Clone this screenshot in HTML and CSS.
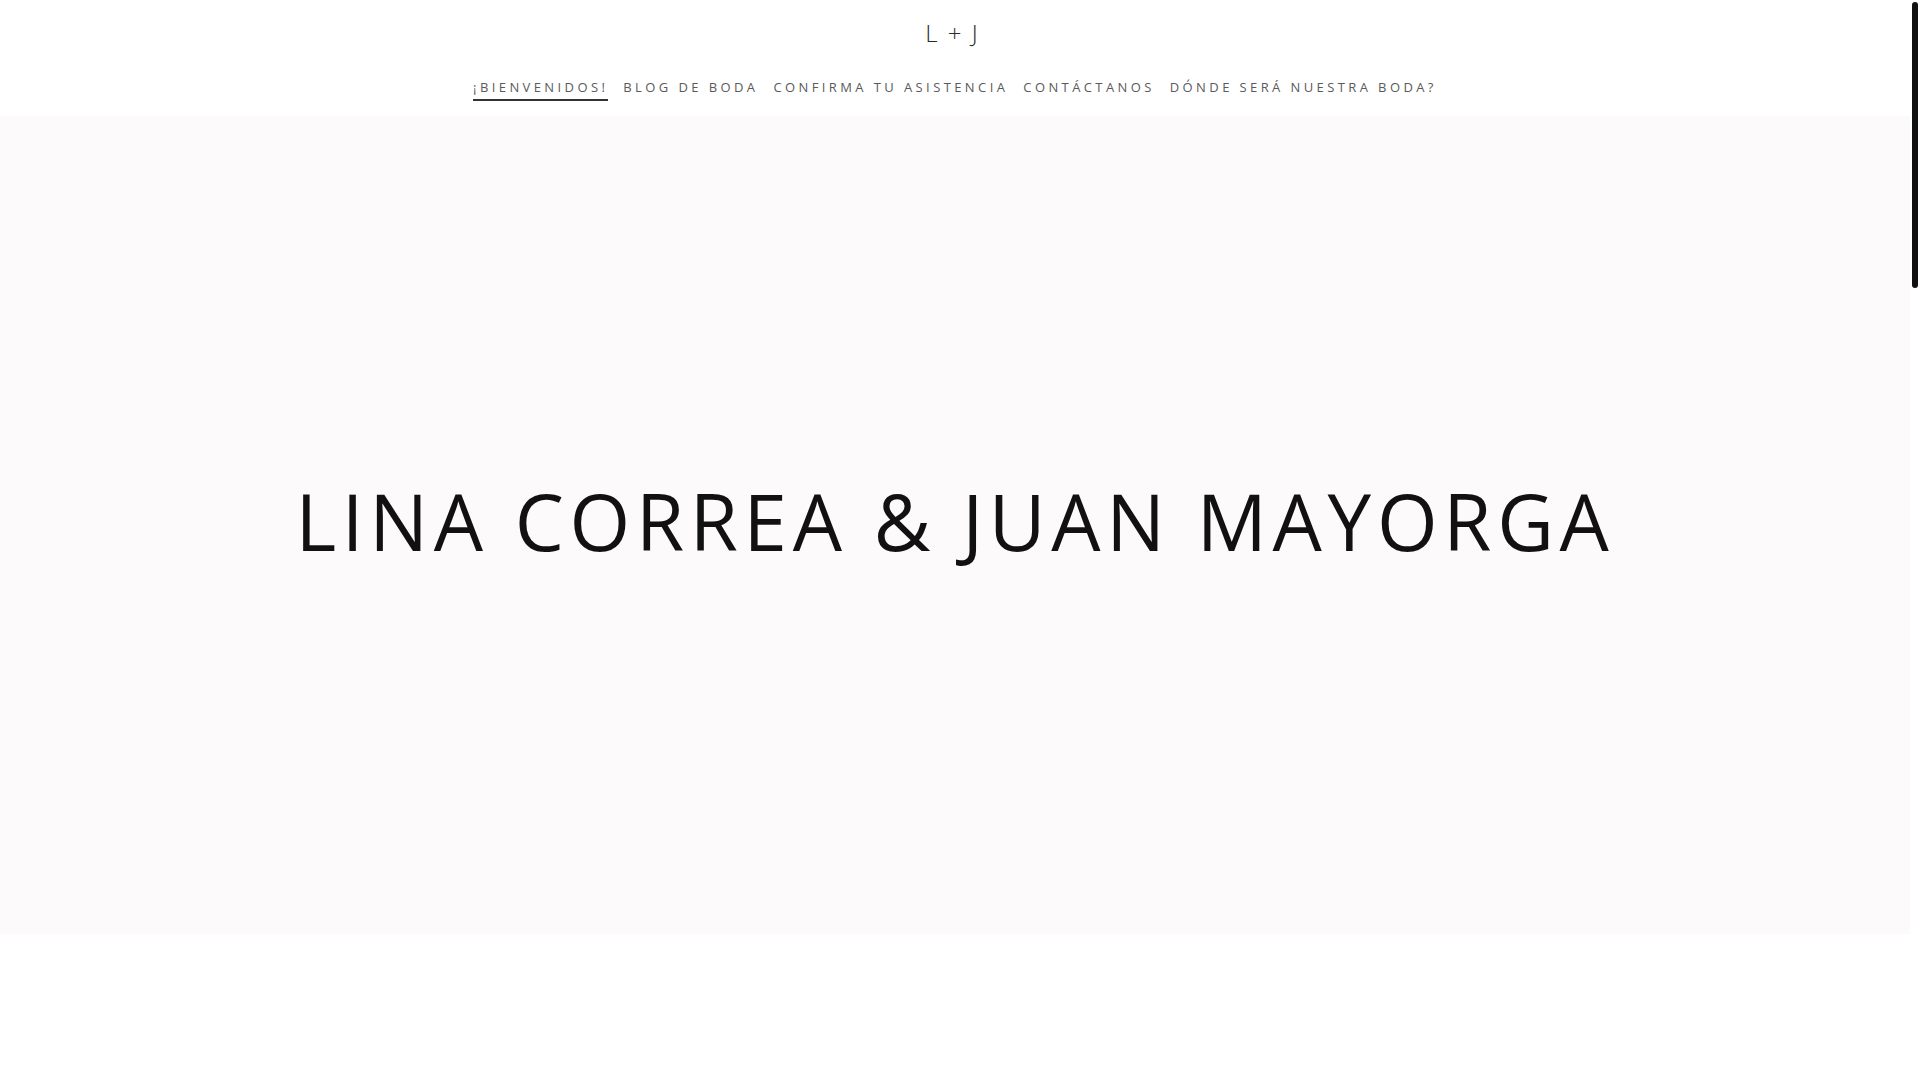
FILE: index.html
```html
<!DOCTYPE html>
<html lang="es">
<head>
<meta charset="utf-8">
<title>L + J</title>
<link rel="stylesheet" href="styles.css">
</head>
<body>
<div class="page">
  <header class="site-header">
    <div class="brand">L + J</div>
    <nav class="main-nav">
      <a class="nav-link active" href="#">¡BIENVENIDOS!</a>
      <a class="nav-link" href="#">BLOG DE BODA</a>
      <a class="nav-link" href="#">CONFIRMA TU ASISTENCIA</a>
      <a class="nav-link" href="#">CONTÁCTANOS</a>
      <a class="nav-link" href="#">DÓNDE SERÁ NUESTRA BODA?</a>
    </nav>
  </header>
  <section class="hero">
    <h1 class="hero-title">LINA CORREA &amp; JUAN MAYORGA</h1>
  </section>
  <section class="below"></section>
</div>
<div class="scrollbar"><div class="scrollbar-thumb"></div></div>
</body>
</html>
```

FILE: styles.css
```css
html, body {
  margin: 0;
  padding: 0;
  background: #ffffff;
}
body {
  font-family: "Open Sans", "DejaVu Sans", sans-serif;
  color: #222;
  overflow: hidden;
}
.page {
  margin-right: 10px;
}
.scrollbar {
  position: fixed;
  top: 0;
  right: 0;
  width: 10px;
  height: 100vh;
  background: #ffffff;
}
.scrollbar-thumb {
  margin: 2px 0 0 2px;
  width: 6px;
  height: 286px;
  border-radius: 3px;
  background: #111111;
}
.site-header {
  height: 116px;
  display: flex;
  flex-direction: column;
  align-items: center;
  background: #ffffff;
}
.brand {
  margin-top: 18px;
  height: 30px;
  line-height: 30px;
  font-size: 24px;
  font-weight: 300;
  color: #2a2a2a;
  letter-spacing: 2px;
  padding-right: 5px;
}
.main-nav {
  margin-top: 30px;
  display: flex;
  gap: 15px;
}
.nav-link {
  display: inline-block;
  font-size: 13px;
  line-height: 18px;
  padding-bottom: 3px;
  border-bottom: 2px solid transparent;
  color: #5a5a5a;
  text-decoration: none;
  letter-spacing: 3.4px;
}
.nav-link.active {
  border-bottom-color: #333333;
}
.hero {
  height: 818px;
  background: #fcfafa;
  display: flex;
  align-items: center;
  justify-content: center;
}
.hero-title {
  margin: 0 0 8px 0;
  font-size: 78px;
  font-weight: 400;
  color: #111111;
  letter-spacing: 5.7px;
  white-space: nowrap;
}
.below {
  height: 3136px;
  background: #ffffff;
}
```
